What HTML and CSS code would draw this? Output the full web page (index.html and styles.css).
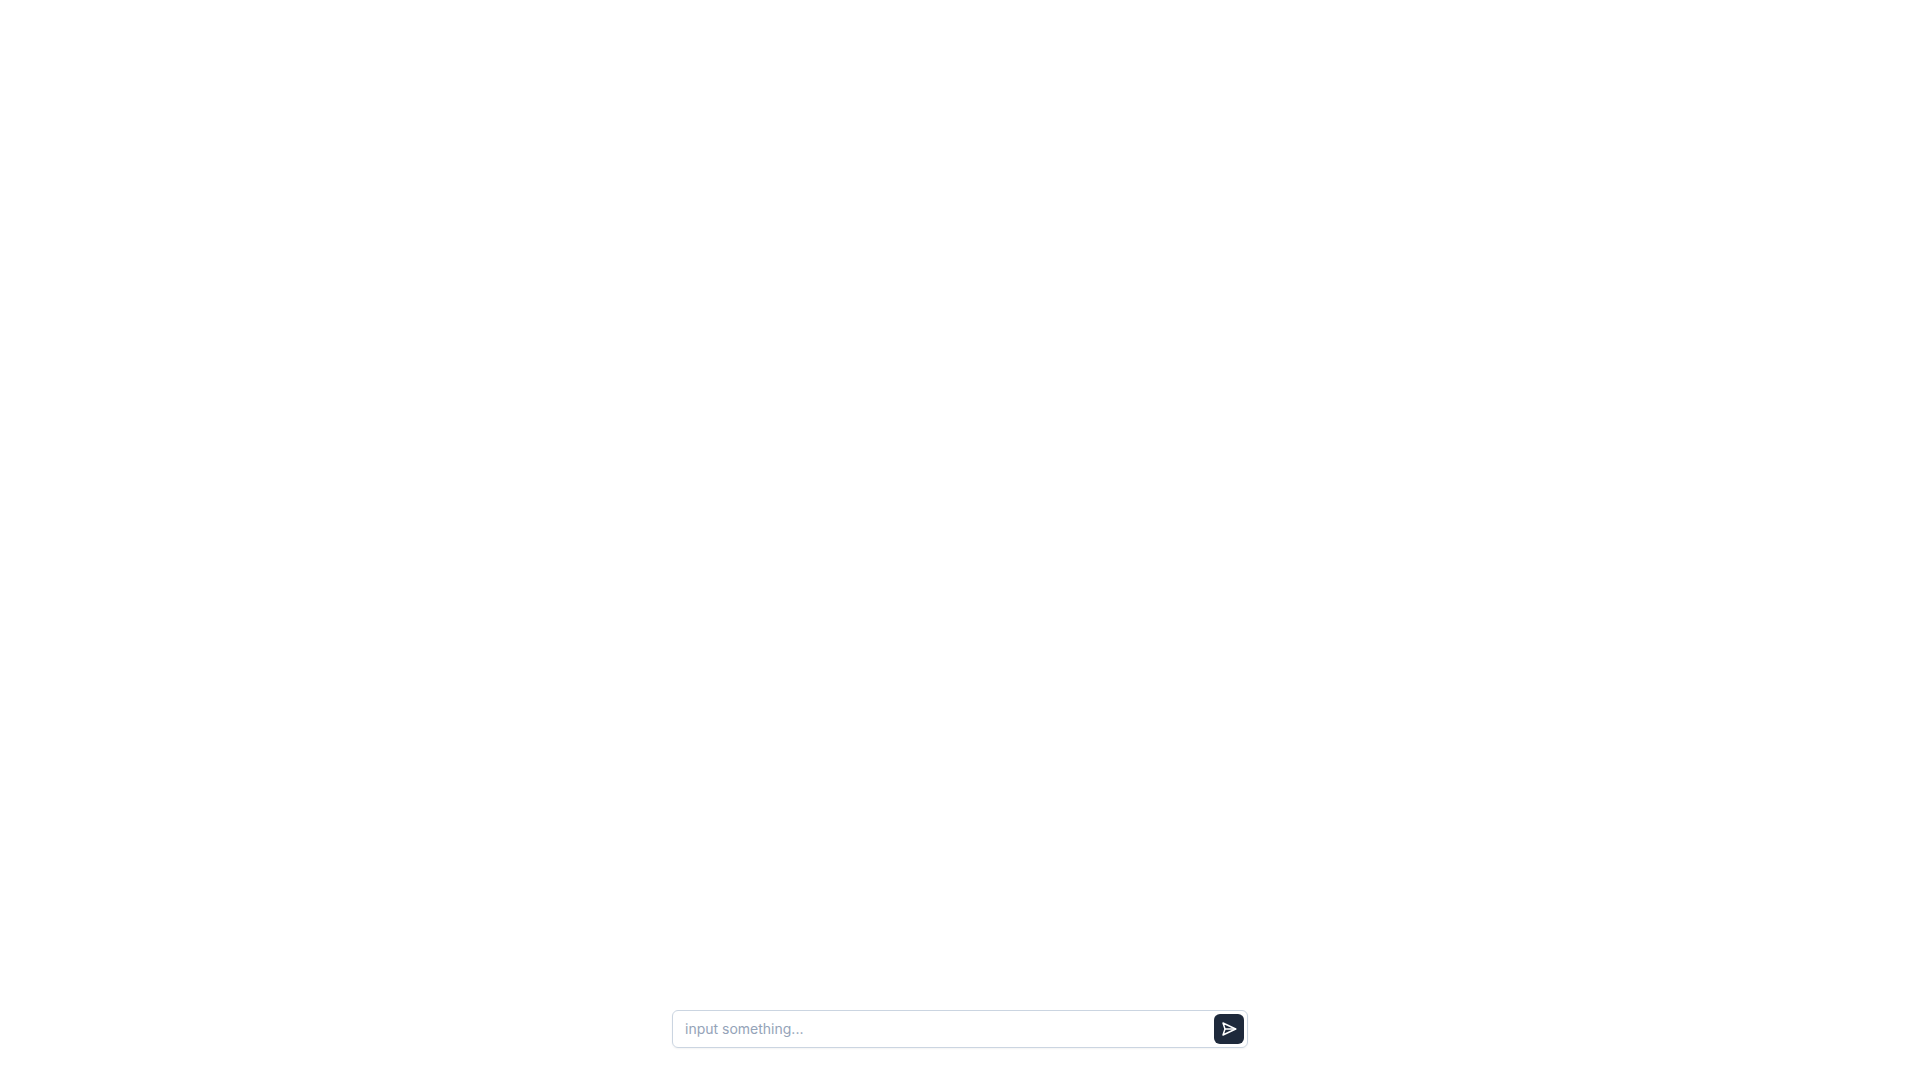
FILE: index.html
```html
<!DOCTYPE html>
<html lang="en">
<head>
<meta charset="utf-8">
<meta name="viewport" content="width=device-width, initial-scale=1">
<title>Chat</title>
<link rel="stylesheet" href="styles.css">
</head>
<body>
<main class="chat">
  <div class="messages"></div>
  <form class="composer">
    <input class="composer-input" type="text" placeholder="input something..." aria-label="Message">
    <button class="send-button" type="button" aria-label="Send">
      <svg class="send-icon" viewBox="0 0 24 24" fill="none" stroke="currentColor" stroke-width="2.2" stroke-linecap="round" stroke-linejoin="round" aria-hidden="true"><path d="m3 3 3 9-3 9 19-9Z"/><path d="M6 12h16"/></svg>
    </button>
  </form>
</main>
</body>
</html>
```
FILE: styles.css
```css
* {
  box-sizing: border-box;
}

body {
  margin: 0;
  background: #fff;
  color: #0f172a;
  font-family: Inter, sans-serif;
}

.chat {
  display: flex;
  flex-direction: column;
  min-height: 100vh;
  padding: 0 16px 32px;
}

.messages {
  flex: 1;
}

.composer {
  display: flex;
  align-items: center;
  gap: 8px;
  width: 100%;
  max-width: 576px;
  margin: 0 auto;
  padding: 3px;
  border: 1px solid #cbd5e1;
  border-radius: 6px;
  box-shadow: 0 1px 2px rgb(0 0 0 / 5%);
}

.composer-input {
  flex: 1;
  min-width: 0;
  padding: 0 9px;
  border: 0;
  outline: 0;
  background: transparent;
  color: inherit;
  font: 14px/20px Inter, sans-serif;
}

.composer-input::placeholder {
  color: #94a3b8;
}

.send-button {
  display: flex;
  align-items: center;
  justify-content: center;
  width: 30px;
  height: 30px;
  padding: 0;
  border: 0;
  border-radius: 6px;
  background: #1e293b;
  color: #fff;
  cursor: pointer;
}

.send-icon {
  width: 16px;
  height: 16px;
}
```
